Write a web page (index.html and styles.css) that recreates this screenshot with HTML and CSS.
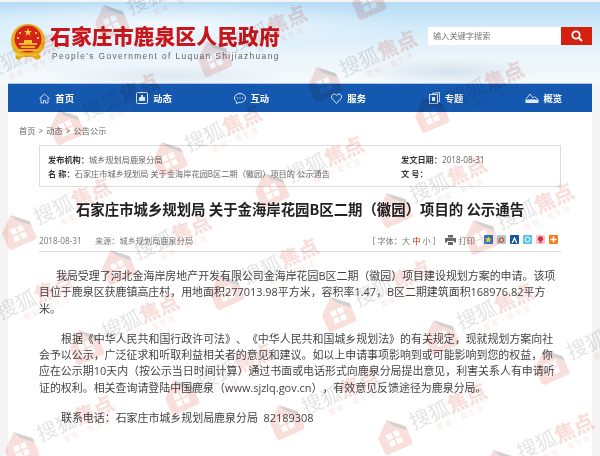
FILE: index.html
```html
<!DOCTYPE html>
<html lang="zh-CN">
<head>
    <meta charset="UTF-8">
    <title>石家庄市鹿泉区人民政府</title>
    <link rel="stylesheet" href="styles.css">
</head>
<body>
    <svg class="defs" width="0" height="0">
        <symbol id="house" viewBox="0 0 36 36">
            <path d="M18 1 34 15v17a3 3 0 0 1-3 3H5a3 3 0 0 1-3-3V15Z" fill="#e8877c"/>
            <path d="M18 1 34 15v5L22 9Z" fill="#555"/>
            <path d="M11 15h6v6h-6zM19 15h6v6h-6zM11 23h6v6h-6zM19 23h6v6h-6z" fill="#fff"/>
        </symbol>
    </svg>

    <!-- 页头 -->
    <header class="header">
        <div class="brand">
            <svg class="emblem" width="36" height="38" viewBox="0 0 36 38">
                <path d="M18 1C8 1 1 8 1 18c0 6 3 11 6 13l-2 4 4 2 4-3h10l4 3 4-2-2-4c3-2 6-7 6-13C35 8 28 1 18 1Z" fill="#e5b21c"/>
                <circle cx="18" cy="16" r="13.5" fill="#d8221d"/>
                <path d="M18 5l1 3h3l-2.500 2 1 3-2.500-2-2.500 2 1-3L14 8h3Z" fill="#f6d32c"/>
                <path d="M9 9h2v2H9zM25 9h2v2h-2zM7 14h2v2H7zM27 14h2v2h-2z" fill="#f6d32c"/>
                <path d="M9 20h18v2H9zM11 23h14v2H11zM8 26h20v2H8zM7 30h22v3H7z" fill="#f2c62a"/>
                <path d="M14 17h8v3h-8z" fill="#f2c62a"/>
            </svg>
            <div class="brand-text">
                <div class="brand-name">石家庄市鹿泉区人民政府</div>
                <div class="brand-en">People's Government of Luquan Shijiazhuang</div>
            </div>
        </div>
        <form class="search">
            <span class="search-input">输入关键字搜索</span>
            <span class="search-btn">
                <svg width="12" height="12" viewBox="0 0 12 12"><circle cx="5" cy="5" r="3.700" fill="none" stroke="#fff" stroke-width="1.800"/><path d="M8 8l3 3" stroke="#fff" stroke-width="2"/></svg>
            </span>
        </form>
    </header>

    <!-- 导航 -->
    <nav class="nav">
        <a class="nav-item">
            <svg width="11" height="11" viewBox="0 0 11 11"><path d="M.5 5.500 5.500 1l5 4.500M2 5v5h2.500V7.500h2V10H9V5" fill="none" stroke="#dfe8f5" stroke-width=".9"/></svg>
            首页
        </a>
        <a class="nav-item">
            <svg width="12" height="12" viewBox="0 0 12 12"><rect x=".5" y=".5" width="11" height="11" rx="1" fill="none" stroke="#dfe8f5"/><path d="M3 5h6v4H3z" fill="#dfe8f5"/><path d="M5 3h2v2H5z" fill="#dfe8f5"/></svg>
            动态
        </a>
        <a class="nav-item">
            <svg width="12" height="11" viewBox="0 0 12 11"><path d="M6 .5c3 0 5.500 2 5.500 4.500S9 9.500 6 9.500H5L2.500 10.500V8.500C1 7.500.5 6.200.5 5 .5 2.500 3 .5 6 .5Z" fill="none" stroke="#dfe8f5"/><path d="M3 5h1.200M5.400 5h1.200M7.800 5H9" stroke="#dfe8f5"/></svg>
            互动
        </a>
        <a class="nav-item">
            <svg width="11" height="11" viewBox="0 0 11 11"><path d="M5.500 10.500 1 5.500C-.3 3.500 1 1 3 1c1.200 0 2 .6 2.500 1.500C6 1.600 6.800 1 8 1c2 0 3.300 2.500 2 4.500Z" fill="none" stroke="#dfe8f5"/></svg>
            服务
        </a>
        <a class="nav-item">
            <svg width="11" height="12" viewBox="0 0 11 12"><path d="M3 1.500 10.500.5v9L8.500 10" fill="none" stroke="#dfe8f5" stroke-width=".9"/><rect x=".5" y="2.500" width="8" height="9" fill="none" stroke="#dfe8f5" stroke-width=".9"/><path d="M3 5h3v4H3z" fill="#dfe8f5"/></svg>
            专题
        </a>
        <a class="nav-item">
            <svg width="14" height="11" viewBox="0 0 14 11"><path d="M.5 7 5 1l3 4 1.500-1.500L13.500 7" fill="none" stroke="#dfe8f5" stroke-width=".9"/><path d="M.5 7c4-1 8-1 13 0v3H.5z" fill="#dfe8f5"/></svg>
            概览
        </a>
    </nav>

    <main class="content">
        <div class="crumb">首页 &gt; 动态 &gt; 公告公示</div>

        <div class="info">
            <div class="info-left">
                <div><b>发布机构：</b>城乡规划局鹿泉分局</div>
                <div><b>名 称：</b>石家庄市城乡规划局 关于金海岸花园B区二期（徽园）项目的 公示通告</div>
            </div>
            <div class="info-right">
                <div><b>发文日期：</b>2018-08-31</div>
                <div><b>文 号：</b></div>
            </div>
        </div>

        <h1 class="title">石家庄市城乡规划局 关于金海岸花园B区二期（徽园）项目的 公示通告</h1>

        <div class="meta">
            <div class="meta-left">
                <span class="date">2018-08-31</span>
                <span>来源：城乡规划局鹿泉分局</span>
            </div>
            <div class="meta-right">
                <span class="size">[ 字体：大 <em>中</em> 小 ]</span>
                <span class="print">
                    <svg width="11" height="10" viewBox="0 0 11 10"><path d="M3 0h5v2.500H3zM0 3h11v4.500H9V6H2v1.500H0zM3 7h5v3H3z" fill="#666"/></svg>
                    打印
                </span>
                <span class="shares">
                    <svg width="9" height="9" viewBox="0 0 9 9"><rect width="9" height="9" rx="1" fill="#2a7fd0"/><path d="M4.500 1l1 2.500H8L6 5l.8 2.800-2.300-1.500-2.300 1.500L3 5 1 3.500h2.500Z" fill="#f6d32c"/></svg>
                    <svg width="9" height="9" viewBox="0 0 9 9"><rect width="9" height="9" rx="1" fill="#a8ccd8"/><circle cx="4.500" cy="5" r="2.800" fill="#d9603c"/><circle cx="4.500" cy="5" r="1" fill="#fff"/></svg>
                    <svg width="9" height="9" viewBox="0 0 9 9"><rect width="9" height="9" rx="1" fill="#14559e"/><path d="M4.500 1.500 7.500 8H6L4.500 4.500 3 8H1.500Z" fill="#fff"/></svg>
                    <svg width="9" height="9" viewBox="0 0 9 9"><rect width="9" height="9" rx="1" fill="#5ac0e8"/><circle cx="4.500" cy="4.500" r="2.600" fill="none" stroke="#fff"/></svg>
                    <svg width="9" height="9" viewBox="0 0 9 9"><rect width="9" height="9" rx="1" fill="#f3c4cc"/><circle cx="4.500" cy="3.800" r="2.600" fill="#d9304a"/><path d="M3.500 6.500h2V8h-2z" fill="#d9304a"/></svg>
                    <svg width="9" height="9" viewBox="0 0 9 9"><rect width="9" height="9" rx="1" fill="#f47a1c"/><path d="M3.700 1.500h1.600v2.200h2.200v1.600H5.300v2.200H3.700V5.300H1.500V3.700h2.200Z" fill="#fff"/></svg>
                </span>
            </div>
        </div>

        <article class="body">
            <p class="p1">我局受理了河北金海岸房地产开发有限公司金海岸花园B区二期（徽园）项目建设规划方案的申请。该项目位于鹿泉区获鹿镇高庄村，用地面积277013.98平方米，容积率1.47，B区二期建筑面积168976.82平方米。</p>
            <p>根据《中华人民共和国行政许可法》、《中华人民共和国城乡规划法》的有关规定，现就规划方案向社会予以公示，广泛征求和听取利益相关者的意见和建议。如以上申请事项影响到或可能影响到您的权益，你应在公示期10天内（按公示当日时间计算）通过书面或电话形式向鹿泉分局提出意见，利害关系人有申请听证的权利。相关查询请登陆中国鹿泉（www.sjzlq.gov.cn），有效意见反馈途径为鹿泉分局。</p>
            <p>联系电话：石家庄市城乡规划局鹿泉分局&nbsp; 82189308</p>
        </article>
    </main>

    <!-- 水印 -->
    <div class="marks">
        <div class="mark"><svg width="34" height="34"><use href="#house"/></svg><span class="wm">搜狐<b>焦点</b><small>爱 家 · 爱 生 活</small></span></div>
        <div class="mark"><svg width="34" height="34"><use href="#house"/></svg><span class="wm">搜狐<b>焦点</b><small>爱 家 · 爱 生 活</small></span></div>
        <div class="mark"><svg width="34" height="34"><use href="#house"/></svg><span class="wm">搜狐<b>焦点</b><small>爱 家 · 爱 生 活</small></span></div>
        <div class="mark"><svg width="34" height="34"><use href="#house"/></svg><span class="wm">搜狐<b>焦点</b><small>爱 家 · 爱 生 活</small></span></div>
        <div class="mark"><svg width="34" height="34"><use href="#house"/></svg><span class="wm">搜狐<b>焦点</b><small>爱 家 · 爱 生 活</small></span></div>
        <div class="mark"><svg width="34" height="34"><use href="#house"/></svg><span class="wm">搜狐<b>焦点</b><small>爱 家 · 爱 生 活</small></span></div>
        <div class="mark"><svg width="34" height="34"><use href="#house"/></svg><span class="wm">搜狐<b>焦点</b><small>爱 家 · 爱 生 活</small></span></div>
        <div class="mark"><svg width="34" height="34"><use href="#house"/></svg><span class="wm">搜狐<b>焦点</b><small>爱 家 · 爱 生 活</small></span></div>
        <div class="mark"><svg width="34" height="34"><use href="#house"/></svg><span class="wm">搜狐<b>焦点</b><small>爱 家 · 爱 生 活</small></span></div>
        <div class="mark"><svg width="34" height="34"><use href="#house"/></svg><span class="wm">搜狐<b>焦点</b><small>爱 家 · 爱 生 活</small></span></div>
        <div class="mark"><svg width="34" height="34"><use href="#house"/></svg><span class="wm">搜狐<b>焦点</b><small>爱 家 · 爱 生 活</small></span></div>
        <div class="mark"><svg width="34" height="34"><use href="#house"/></svg><span class="wm">搜狐<b>焦点</b><small>爱 家 · 爱 生 活</small></span></div>
        <div class="mark"><svg width="34" height="34"><use href="#house"/></svg><span class="wm">搜狐<b>焦点</b><small>爱 家 · 爱 生 活</small></span></div>
        <div class="mark"><svg width="34" height="34"><use href="#house"/></svg><span class="wm">搜狐<b>焦点</b><small>爱 家 · 爱 生 活</small></span></div>
        <div class="mark"><svg width="34" height="34"><use href="#house"/></svg><span class="wm">搜狐<b>焦点</b><small>爱 家 · 爱 生 活</small></span></div>
        <div class="mark"><svg width="34" height="34"><use href="#house"/></svg><span class="wm">搜狐<b>焦点</b><small>爱 家 · 爱 生 活</small></span></div>
        <div class="mark"><svg width="34" height="34"><use href="#house"/></svg><span class="wm">搜狐<b>焦点</b><small>爱 家 · 爱 生 活</small></span></div>
        <div class="mark"><svg width="34" height="34"><use href="#house"/></svg><span class="wm">搜狐<b>焦点</b><small>爱 家 · 爱 生 活</small></span></div>
        <div class="mark"><svg width="34" height="34"><use href="#house"/></svg><span class="wm">搜狐<b>焦点</b><small>爱 家 · 爱 生 活</small></span></div>
        <div class="mark"><svg width="34" height="34"><use href="#house"/></svg><span class="wm">搜狐<b>焦点</b><small>爱 家 · 爱 生 活</small></span></div>
        <div class="mark"><svg width="34" height="34"><use href="#house"/></svg><span class="wm">搜狐<b>焦点</b><small>爱 家 · 爱 生 活</small></span></div>
        <div class="mark"><svg width="34" height="34"><use href="#house"/></svg><span class="wm">搜狐<b>焦点</b><small>爱 家 · 爱 生 活</small></span></div>
        <div class="mark"><svg width="34" height="34"><use href="#house"/></svg><span class="wm">搜狐<b>焦点</b><small>爱 家 · 爱 生 活</small></span></div>
        <div class="mark"><svg width="34" height="34"><use href="#house"/></svg><span class="wm">搜狐<b>焦点</b><small>爱 家 · 爱 生 活</small></span></div>
    </div>
</body>
</html>
```

FILE: styles.css
```css
* {
    margin: 0;
    padding: 0;
    box-sizing: border-box;
}

html, body {
    height: 456px;
    overflow: hidden;
}

body {
    position: relative;
    font-family: "Open Sans", "Noto Sans CJK SC", sans-serif;
    background: #f4f4f4;
    color: #555;
    font-size: 8.2px;
    text-spacing-trim: space-all;
}

.defs {
    position: absolute;
}

/* 页头 */
.header {
    height: 81px;
    margin-top: 2px;
    padding: 21px 8px 0 10px;
    display: flex;
    justify-content: space-between;
    align-items: flex-start;
    background:
        radial-gradient(ellipse 90px 14px at 450px 70px, rgba(190, 210, 228, .55), transparent),
        radial-gradient(ellipse 120px 12px at 170px 74px, rgba(200, 218, 232, .5), transparent),
        radial-gradient(ellipse 240px 24px at 160px 22px, rgba(255, 255, 255, .75), transparent),
        linear-gradient(to bottom, #b6dcf5 0%, #d6ecfa 35%, #ecf5fb 70%, #f6fafc 100%);
}

.brand {
    display: flex;
    align-items: flex-start;
    gap: 4px;
}

.brand-name {
    font-family: "Noto Sans CJK SC", sans-serif;
    font-size: 20.9px;
    line-height: 24px;
    font-weight: 900;
    color: #c8161d;
    text-shadow: 0 0 2px #fff;
}

.brand-en {
    margin: 4px 0 0 2px;
    font-family: "Liberation Sans", sans-serif;
    font-size: 8.4px;
    line-height: 10px;
    letter-spacing: 1.37px;
    color: #666;
    white-space: nowrap;
}

.search {
    display: flex;
    height: 18px;
    margin-top: 4px;
}

.search-input {
    width: 133px;
    padding-left: 5px;
    line-height: 18px;
    background: #fff;
    color: #777;
}

.search-btn {
    width: 31px;
    display: flex;
    align-items: center;
    justify-content: center;
    background: #d4200f;
}

/* 导航 */
.nav {
    height: 29px;
    margin: 0 8px;
    display: flex;
    border-top: 1px solid #a9c6ea;
    background: #1558b0;
}

.nav-item {
    flex: 1;
    display: flex;
    align-items: center;
    justify-content: center;
    gap: 5px;
    font-family: "Noto Sans CJK SC", sans-serif;
    font-size: 9.3px;
    font-weight: 700;
    color: #fff;
}

/* 正文 */
.content {
    height: 346px;
    margin: 0 8px;
    padding: 14px 31px 0;
    background: #fff;
}

.crumb {
    margin-left: -20px;
    line-height: 10px;
    word-spacing: 1px;
    color: #666;
}

.info {
    height: 42px;
    margin-top: 9px;
    padding: 7px 8px 0;
    display: flex;
    border: 1px solid #ddd;
    line-height: 14px;
    color: #666;
}

.info-left {
    width: 353px;
    white-space: nowrap;
}

.info b {
    color: #333;
}

.title {
    margin-top: 12px;
    text-align: center;
    font-family: "Noto Sans CJK SC", sans-serif;
    font-size: 14.4px;
    line-height: 20px;
    font-weight: 700;
    color: #222;
}

.meta {
    height: 24px;
    margin-top: 9px;
    display: flex;
    justify-content: space-between;
    align-items: center;
    border-bottom: 1px solid #ddd;
    color: #777;
}

.date {
    margin-right: 11px;
}

.meta-right {
    display: flex;
    align-items: center;
    padding-right: 3px;
}

.size em {
    font-style: normal;
    color: #d4200f;
}

.print {
    display: flex;
    align-items: center;
    gap: 3px;
    margin: 0 9px;
}

.shares {
    display: flex;
    gap: 4px;
}

.body {
    margin-top: 16px;
    padding-right: 4px;
    font-size: 10.94px;
    line-height: 16.4px;
    color: #444;
}

.body p {
    margin-bottom: 13.4px;
    text-indent: 22px;
}

.body .p1 {
    text-indent: 17px;
}

/* 水印 */
.marks {
    position: absolute;
    inset: 0;
    overflow: hidden;
    pointer-events: none;
    mix-blend-mode: multiply;
    opacity: .27;
}

.mark {
    position: absolute;
    display: flex;
    align-items: flex-start;
    gap: 4px;
    margin: -17px 0 0 -17px;
    transform: rotate(-24deg);
    transform-origin: 17px 17px;
    white-space: nowrap;
    color: #999;
}

.wm {
    display: block;
    position: relative;
    font-family: "Noto Sans CJK SC", sans-serif;
    font-size: 20.5px;
    line-height: 24px;
}

.wm b {
    color: #e8877c;
    font-weight: 900;
}

.wm small {
    position: absolute;
    left: 22px;
    top: 24px;
    font-size: 7px;
    line-height: 9px;
    color: #e8a59c;
}

.mark:nth-child(1) { left: -35px; top: 85px; }
.mark:nth-child(2) { left: 110px; top: 20px; }
.mark:nth-child(3) { left: 213px; top: 57px; }
.mark:nth-child(4) { left: 323px; top: 82px; }
.mark:nth-child(5) { left: 430px; top: 113px; }
.mark:nth-child(6) { left: 367px; top: 0; }
.mark:nth-child(7) { left: 65px; top: 125px; }
.mark:nth-child(8) { left: 168px; top: 157px; }
.mark:nth-child(9) { left: 270px; top: 188px; }
.mark:nth-child(10) { left: 393px; top: 208px; }
.mark:nth-child(11) { left: 480px; top: 235px; }
.mark:nth-child(12) { left: 17px; top: 230px; }
.mark:nth-child(13) { left: 117px; top: 265px; }
.mark:nth-child(14) { left: 225px; top: 290px; }
.mark:nth-child(15) { left: 337px; top: 312px; }
.mark:nth-child(16) { left: 440px; top: 335px; }
.mark:nth-child(17) { left: 550px; top: 365px; }
.mark:nth-child(18) { left: -20px; top: 325px; }
.mark:nth-child(19) { left: 85px; top: 345px; }
.mark:nth-child(20) { left: 180px; top: 395px; }
.mark:nth-child(21) { left: 285px; top: 420px; }
.mark:nth-child(22) { left: 393px; top: 435px; }
.mark:nth-child(23) { left: 500px; top: 465px; }
.mark:nth-child(24) { left: 20px; top: 447px; }
```
